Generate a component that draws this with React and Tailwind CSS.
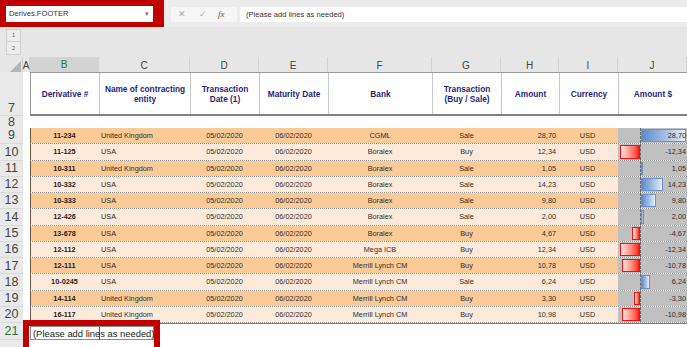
import React from "react";

const rows = [
  ["11-234", "United Kingdom", "CGML", "Sale", 28.7],
  ["11-125", "USA", "Boralex", "Buy", -12.34],
  ["10-311", "United Kingdom", "Boralex", "Sale", 1.05],
  ["10-332", "USA", "Boralex", "Sale", 14.23],
  ["10-333", "USA", "Boralex", "Sale", 9.8],
  ["12-426", "USA", "Boralex", "Sale", 2.0],
  ["13-678", "USA", "Boralex", "Buy", -4.67],
  ["12-112", "USA", "Mega ICB", "Buy", -12.34],
  ["12-111", "USA", "Merrill Lynch CM", "Buy", -10.78],
  ["10-0245", "USA", "Merrill Lynch CM", "Sale", 6.24],
  ["14-114", "United Kingdom", "Merrill Lynch CM", "Buy", -3.3],
  ["16-117", "United Kingdom", "Merrill Lynch CM", "Buy", -10.98],
];

const fmt = (v) => v.toFixed(2).replace(".", ",");

function RowLabel({ n, className = "", green = false }) {
  return (
    <div
      className={`flex items-center justify-center bg-[#e9e9e9] border-b border-[#d9d9d9] text-[12.5px] leading-none ${
        green ? "text-[#217346]" : "text-[#444]"
      } ${className}`}
    >
      {n}
    </div>
  );
}

function HeaderCell({ children, last = false }) {
  return (
    <div
      className={`flex items-center justify-center text-center border-[#c8c8c8] ${
        last ? "border-r border-r-[#9a9a9a]" : "border-r"
      } font-bold text-[8.3px] leading-[10px] text-[#1f1f78]`}
    >
      <span>{children}</span>
    </div>
  );
}

function ColLetter({ children, active = false }) {
  return (
    <div
      className={`flex items-center justify-center border-r border-[#d2d2d2] text-[10px] ${
        active
          ? "bg-[#d3d3d3] text-[#217346] border-b-2 border-b-[#217346]"
          : "text-[#444] border-b border-b-[#cfcfcf]"
      }`}
    >
      {children}
    </div>
  );
}

function Bar({ v }) {
  const w = Math.abs(v) * 1.6;
  return (
    <div className="col-start-1 row-start-1 flex h-full">
      <div className="w-[21.5px] flex justify-end py-[1px]">
        {v < 0 && (
          <div
            className="h-full bg-linear-to-r from-[#ffe4e4] to-[#ff0000] border border-[#f01010]"
            style={{ width: w }}
          />
        )}
      </div>
      <div className="flex-1 border-l border-dashed border-[#6a6a6a] py-[1px]">
        {v > 0 && (
          <div
            className="h-full bg-linear-to-r from-[#5d8bcc] to-[#e4ecf8] border border-[#6a93cf]"
            style={{ width: w }}
          />
        )}
      </div>
    </div>
  );
}

export default function App() {
  const outer =
    "grid grid-cols-[23px_7px_69px_91px_69px_69px_104px_69px_58px_59px_69px]";
  const inner =
    "col-span-9 grid grid-cols-[69px_91px_69px_69px_104px_69px_58px_59px_69px]";
  return (
    <div
      className="relative w-[687px] h-[347px] overflow-hidden bg-white"
      style={{ fontFamily: '"Liberation Sans", Arial, sans-serif' }}
    >
      {/* top bar */}
      <div className="flex h-[27px] bg-[#ececec]">
        <div className="w-[164px] h-[27px] bg-[#c00000] pt-[6px] pl-[6px]">
          <div className="w-[147px] h-[16px] bg-white flex items-center justify-between pl-[3px] pr-[4px] text-[7.6px] text-[#333]">
            <span>Derives.FOOTER</span>
            <span className="text-[7px] text-[#777]">▾</span>
          </div>
        </div>
        <div className="ml-[7px] mt-[7px] h-[15px] w-[66px] bg-[#f6f6f6] flex items-center text-[#a8a8a8] text-[9px]">
          <span className="ml-[7px]">✕</span>
          <span className="ml-[13px]">✓</span>
          <span
            className="ml-[11px] text-[#555] italic text-[9px]"
            style={{ fontFamily: '"Liberation Serif", serif' }}
          >
            fx
          </span>
        </div>
        <div className="ml-[3px] mt-[7px] h-[15px] flex-1 bg-white flex items-center pl-[6px] text-[7.6px] text-[#333]">
          (Please add lines as needed)
        </div>
      </div>

      {/* outline band */}
      <div className="flex h-[30px] bg-[#e6e6e6]">
        <div className="w-[23px] pt-[2px] pl-[6px] flex flex-col">
          <div className="w-[15px] h-[13px] border border-[#d0d0d0] bg-[#ececec] flex items-center justify-center text-[5.5px] text-[#555]">
            1
          </div>
          <div className="w-[15px] h-[13px] border border-t-0 border-[#d0d0d0] bg-[#ececec] flex items-center justify-center text-[5.5px] text-[#555]">
            2
          </div>
        </div>
      </div>

      {/* column letters */}
      <div className={`${outer} h-[15px] bg-[#e6e6e6]`}>
        <div className="flex items-end justify-end pr-[1px] pb-[1px] border-r border-b border-[#cfcfcf]">
          <svg width="11" height="11" viewBox="0 0 11 11">
            <polygon points="11,0 11,11 0,11" fill="#b5b5b5" />
          </svg>
        </div>
        <ColLetter>A</ColLetter>
        <ColLetter active>B</ColLetter>
        <ColLetter>C</ColLetter>
        <ColLetter>D</ColLetter>
        <ColLetter>E</ColLetter>
        <ColLetter>F</ColLetter>
        <ColLetter>G</ColLetter>
        <ColLetter>H</ColLetter>
        <ColLetter>I</ColLetter>
        <ColLetter>J</ColLetter>
      </div>

      {/* row 7 header */}
      <div className={`${outer} h-[44px]`}>
        <div className="flex items-end justify-center pb-[1px] bg-[#e9e9e9] border-b border-[#d9d9d9] text-[12.5px] leading-none text-[#444]">
          7
        </div>
        <div className="bg-white" />
        <div
          className={`${inner} border-l border-t border-[#9a9a9a] border-b-2 border-b-[#808080] bg-white`}
        >
          <HeaderCell>Derivative #</HeaderCell>
          <HeaderCell>
            Name of contracting
            <br />
            entity
          </HeaderCell>
          <HeaderCell>
            Transaction
            <br />
            Date (1)
          </HeaderCell>
          <HeaderCell>Maturity Date</HeaderCell>
          <HeaderCell>Bank</HeaderCell>
          <HeaderCell>
            Transaction
            <br />
            (Buy / Sale)
          </HeaderCell>
          <HeaderCell>Amount</HeaderCell>
          <HeaderCell>Currency</HeaderCell>
          <HeaderCell last>Amount $</HeaderCell>
        </div>
      </div>

      {/* row 8 */}
      <div className={`${outer} h-[12px]`}>
        <RowLabel n={8} />
        <div className="col-span-10 bg-white" />
      </div>

      {/* data rows */}
      {rows.map((r, i) => {
        const bg = i % 2 === 0 ? "bg-[#fcca97]" : "bg-[#fdeadb]";
        const v = r[4];
        return (
          <div key={i} className={`${outer} h-[16.27px]`}>
            <RowLabel n={9 + i} />
            <div className="bg-white" />
            <div
              className={`${inner} border-b border-dotted border-[#8f8f8f] text-[7.3px] text-[#2e2e2e] leading-none`}
            >
              <div
                className={`${bg} shadow-[inset_1px_0_0_#6b5744] flex items-center justify-center font-bold text-[#1e1e1e]`}
              >
                {r[0]}
              </div>
              <div className={`${bg} flex items-center pl-[2px]`}>{r[1]}</div>
              <div className={`${bg} flex items-center justify-center`}>
                05/02/2020
              </div>
              <div className={`${bg} flex items-center justify-center`}>
                06/02/2020
              </div>
              <div className={`${bg} flex items-center justify-center`}>
                {r[2]}
              </div>
              <div className={`${bg} flex items-center justify-center`}>
                {r[3]}
              </div>
              <div className={`${bg} flex items-center justify-end pr-[3px]`}>
                {fmt(Math.abs(v))}
              </div>
              <div className={`${bg} flex items-center justify-center pr-[2px]`}>
                USD
              </div>
              <div className="bg-[#c0c0c0] grid h-full">
                <Bar v={v} />
                <div className="col-start-1 row-start-1 flex items-center justify-end pr-[1px]">
                  {fmt(v)}
                </div>
              </div>
            </div>
          </div>
        );
      })}

      {/* row 21 */}
      <div className={`${outer} h-[17px]`}>
        <RowLabel n={21} green className="bg-[#dcdcdc]" />
        <div className="bg-white" />
        <div className="col-span-9 border-t-[1.5px] border-[#7a7a7a] bg-white pt-[2px]">
          <div className="grid w-[124px] h-[14px] border border-[#8c8c8c] bg-white">
            <div className="col-start-1 row-start-1 w-[69px] border-r border-[#217346]" />
            <div className="col-start-1 row-start-1 flex items-center pl-[2px] text-[9.4px] text-[#222] whitespace-nowrap">
              (Please add lines as needed)
            </div>
          </div>
        </div>
      </div>
      <div className={`${outer} h-[10px]`}>
        <div className="bg-[#e9e9e9]" />
        <div className="col-span-10 bg-white" />
      </div>

      {/* red annotation */}
      <div className="absolute left-[23px] top-[320px] w-[137px] h-[40px] border-[6px] border-[#c00000]" />
    </div>
  );
}
